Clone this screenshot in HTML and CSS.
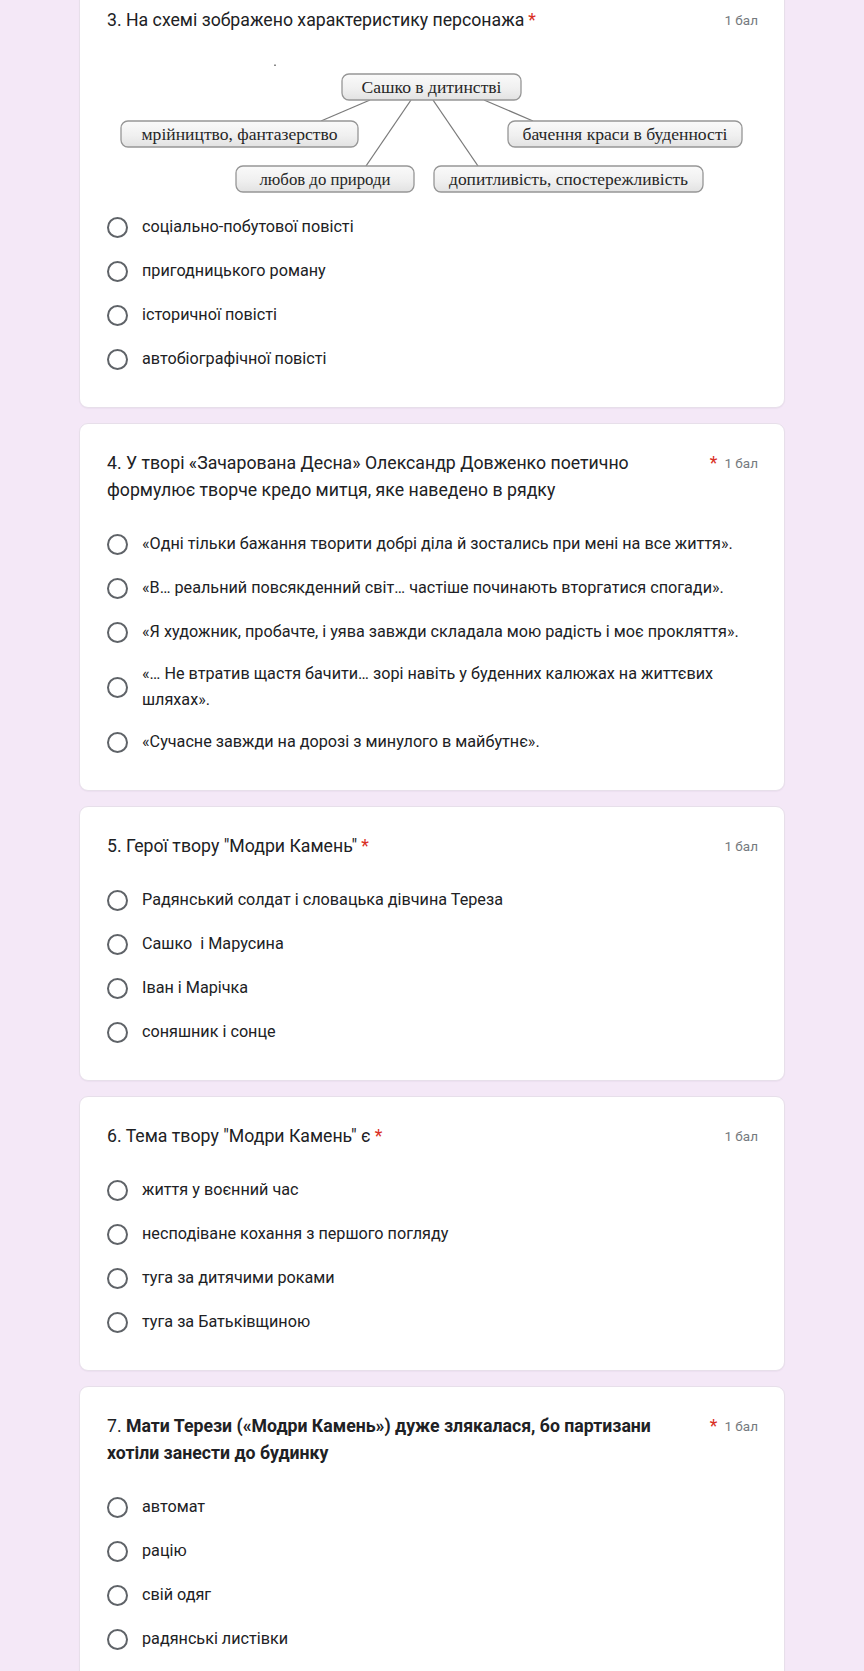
FILE: index.html
```html
<!DOCTYPE html>
<html lang="uk">
<head>
<meta charset="utf-8">
<title>Тест</title>
<link rel="stylesheet" href="styles.css">
</head>
<body>
<main class="page">

  <section class="card">
    <div class="q-head">
      <div class="q-title">3. На схемі зображено характеристику персонажа</div>
      <span class="req">*</span>
      <span class="points">1 бал</span>
    </div>
    <svg class="diagram" viewBox="0 -5 660 165" xmlns="http://www.w3.org/2000/svg">
      <defs>
        <linearGradient id="bx" x1="0" y1="0" x2="0" y2="1">
          <stop offset="0" stop-color="#fafafa"/>
          <stop offset="0.55" stop-color="#f0f0f0"/>
          <stop offset="1" stop-color="#e2e2e2"/>
        </linearGradient>
      </defs>
      <rect x="168" y="29.5" width="2" height="1.5" fill="#8a8a8a"/>
      <g stroke="#7a7a7a" stroke-width="1.3" fill="none">
        <line x1="264" y1="65" x2="215" y2="86"/>
        <line x1="305" y1="65" x2="260" y2="131"/>
        <line x1="327" y1="65" x2="372" y2="131"/>
        <line x1="378" y1="65" x2="427" y2="86"/>
      </g>
      <g fill="url(#bx)" stroke="#969696" stroke-width="1.3">
        <rect x="236" y="39" width="179" height="26" rx="7"/>
        <rect x="15" y="86" width="237" height="26" rx="7"/>
        <rect x="402" y="86" width="234" height="26" rx="7"/>
        <rect x="130" y="131" width="178" height="26" rx="7"/>
        <rect x="328" y="131" width="269" height="26" rx="7"/>
      </g>
      <g class="dtext" text-anchor="middle">
        <text x="325.5" y="57.5" textLength="140" lengthAdjust="spacingAndGlyphs">Сашко в дитинстві</text>
        <text x="133.5" y="104.5" textLength="196" lengthAdjust="spacingAndGlyphs">мрійництво, фантазерство</text>
        <text x="519" y="104.5" textLength="205" lengthAdjust="spacingAndGlyphs">бачення краси в буденності</text>
        <text x="219" y="149.5" textLength="131" lengthAdjust="spacingAndGlyphs">любов до природи</text>
        <text x="462.5" y="149.5" textLength="239" lengthAdjust="spacingAndGlyphs">допитливість, спостережливість</text>
      </g>
    </svg>
    <ul class="options options--after-figure">
      <li class="opt"><span class="radio"></span><span class="opt-text">соціально-побутової повісті</span></li>
      <li class="opt"><span class="radio"></span><span class="opt-text">пригодницького роману</span></li>
      <li class="opt"><span class="radio"></span><span class="opt-text">історичної повісті</span></li>
      <li class="opt"><span class="radio"></span><span class="opt-text">автобіографічної повісті</span></li>
    </ul>
  </section>

  <section class="card">
    <div class="q-head q-head--long">
      <div class="q-title">4. У творі «Зачарована Десна» Олександр Довженко поетично формулює творче кредо митця, яке наведено в рядку</div>
      <span class="req">*</span>
      <span class="points">1 бал</span>
    </div>
    <ul class="options">
      <li class="opt"><span class="radio"></span><span class="opt-text">«Одні тільки бажання творити добрі діла й зостались при мені на все життя».</span></li>
      <li class="opt"><span class="radio"></span><span class="opt-text">«В… реальний повсякденний світ… частіше починають вторгатися спогади».</span></li>
      <li class="opt"><span class="radio"></span><span class="opt-text">«Я художник, пробачте, і уява завжди складала мою радість і моє прокляття».</span></li>
      <li class="opt"><span class="radio"></span><span class="opt-text">«… Не втратив щастя бачити… зорі навіть у буденних калюжах на життєвих шляхах».</span></li>
      <li class="opt"><span class="radio"></span><span class="opt-text">«Сучасне завжди на дорозі з минулого в майбутнє».</span></li>
    </ul>
  </section>

  <section class="card">
    <div class="q-head">
      <div class="q-title">5. Герої твору "Модри Камень"</div>
      <span class="req">*</span>
      <span class="points">1 бал</span>
    </div>
    <ul class="options">
      <li class="opt"><span class="radio"></span><span class="opt-text">Радянський солдат і словацька дівчина Тереза</span></li>
      <li class="opt"><span class="radio"></span><span class="opt-text">Сашко&nbsp; і Марусина</span></li>
      <li class="opt"><span class="radio"></span><span class="opt-text">Іван і Марічка</span></li>
      <li class="opt"><span class="radio"></span><span class="opt-text">соняшник і сонце</span></li>
    </ul>
  </section>

  <section class="card">
    <div class="q-head">
      <div class="q-title">6. Тема твору "Модри Камень" є</div>
      <span class="req">*</span>
      <span class="points">1 бал</span>
    </div>
    <ul class="options">
      <li class="opt"><span class="radio"></span><span class="opt-text">життя у воєнний час</span></li>
      <li class="opt"><span class="radio"></span><span class="opt-text">несподіване кохання з першого погляду</span></li>
      <li class="opt"><span class="radio"></span><span class="opt-text">туга за дитячими роками</span></li>
      <li class="opt"><span class="radio"></span><span class="opt-text">туга за Батьківщиною</span></li>
    </ul>
  </section>

  <section class="card">
    <div class="q-head q-head--long">
      <div class="q-title">7. <b>Мати Терези («Модри Камень») дуже злякалася, бо партизани хотіли занести до будинку</b></div>
      <span class="req">*</span>
      <span class="points">1 бал</span>
    </div>
    <ul class="options">
      <li class="opt"><span class="radio"></span><span class="opt-text">автомат</span></li>
      <li class="opt"><span class="radio"></span><span class="opt-text">рацію</span></li>
      <li class="opt"><span class="radio"></span><span class="opt-text">свій одяг</span></li>
      <li class="opt"><span class="radio"></span><span class="opt-text">радянські листівки</span></li>
    </ul>
  </section>

</main>
</body>
</html>
```

FILE: styles.css
```css
html, body {
  margin: 0;
  padding: 0;
  background: #f4e8f7;
}

body {
  font-family: Roboto, "Noto Sans", "Liberation Sans", sans-serif;
  color: #202124;
}

.page {
  width: 706px;
  margin: -20px auto 0;
  display: flex;
  flex-direction: column;
  gap: 15px;
}

.card {
  background: #ffffff;
  border: 1px solid #e7dfea;
  border-radius: 9px;
  padding: 26px 26px 26px 27px;
  box-shadow: 0 1px 1px rgba(120, 90, 130, 0.06);
}

.q-head {
  display: flex;
  align-items: flex-start;
}

.q-title {
  flex: 0 1 auto;
  max-width: 595px;
  font-size: 17.7px;
  line-height: 27px;
  font-weight: 400;
}

.q-title b {
  font-weight: 700;
}

.req {
  flex: 0 0 auto;
  color: #d93025;
  font-size: 17.7px;
  line-height: 27px;
  margin-left: 4px;
}

.q-head--long .req {
  margin-left: 16px;
}

.points {
  margin-left: auto;
  padding-left: 7px;
  flex: 0 0 auto;
  font-size: 13.5px;
  line-height: 27px;
  color: #757a7e;
}

.diagram {
  display: block;
  width: 660px;
  height: 165px;
  margin-top: -4px;
  margin-left: -1px;
}

.dtext {
  font-family: "Liberation Serif", "DejaVu Serif", serif;
  font-size: 17px;
  fill: #262626;
}

.options {
  list-style: none;
  margin: 18px 0 0;
  padding: 0;
}

.options--after-figure {
  margin-top: 10px;
}

.opt {
  display: flex;
  align-items: center;
  min-height: 44px;
  padding: 7px 0;
  box-sizing: border-box;
}

.radio {
  flex: 0 0 auto;
  width: 21px;
  height: 21px;
  box-sizing: border-box;
  border: 2px solid #5f6368;
  border-radius: 50%;
  margin-right: 14px;
}

.opt-text {
  font-size: 16.2px;
  line-height: 26px;
  color: #202124;
}
```
